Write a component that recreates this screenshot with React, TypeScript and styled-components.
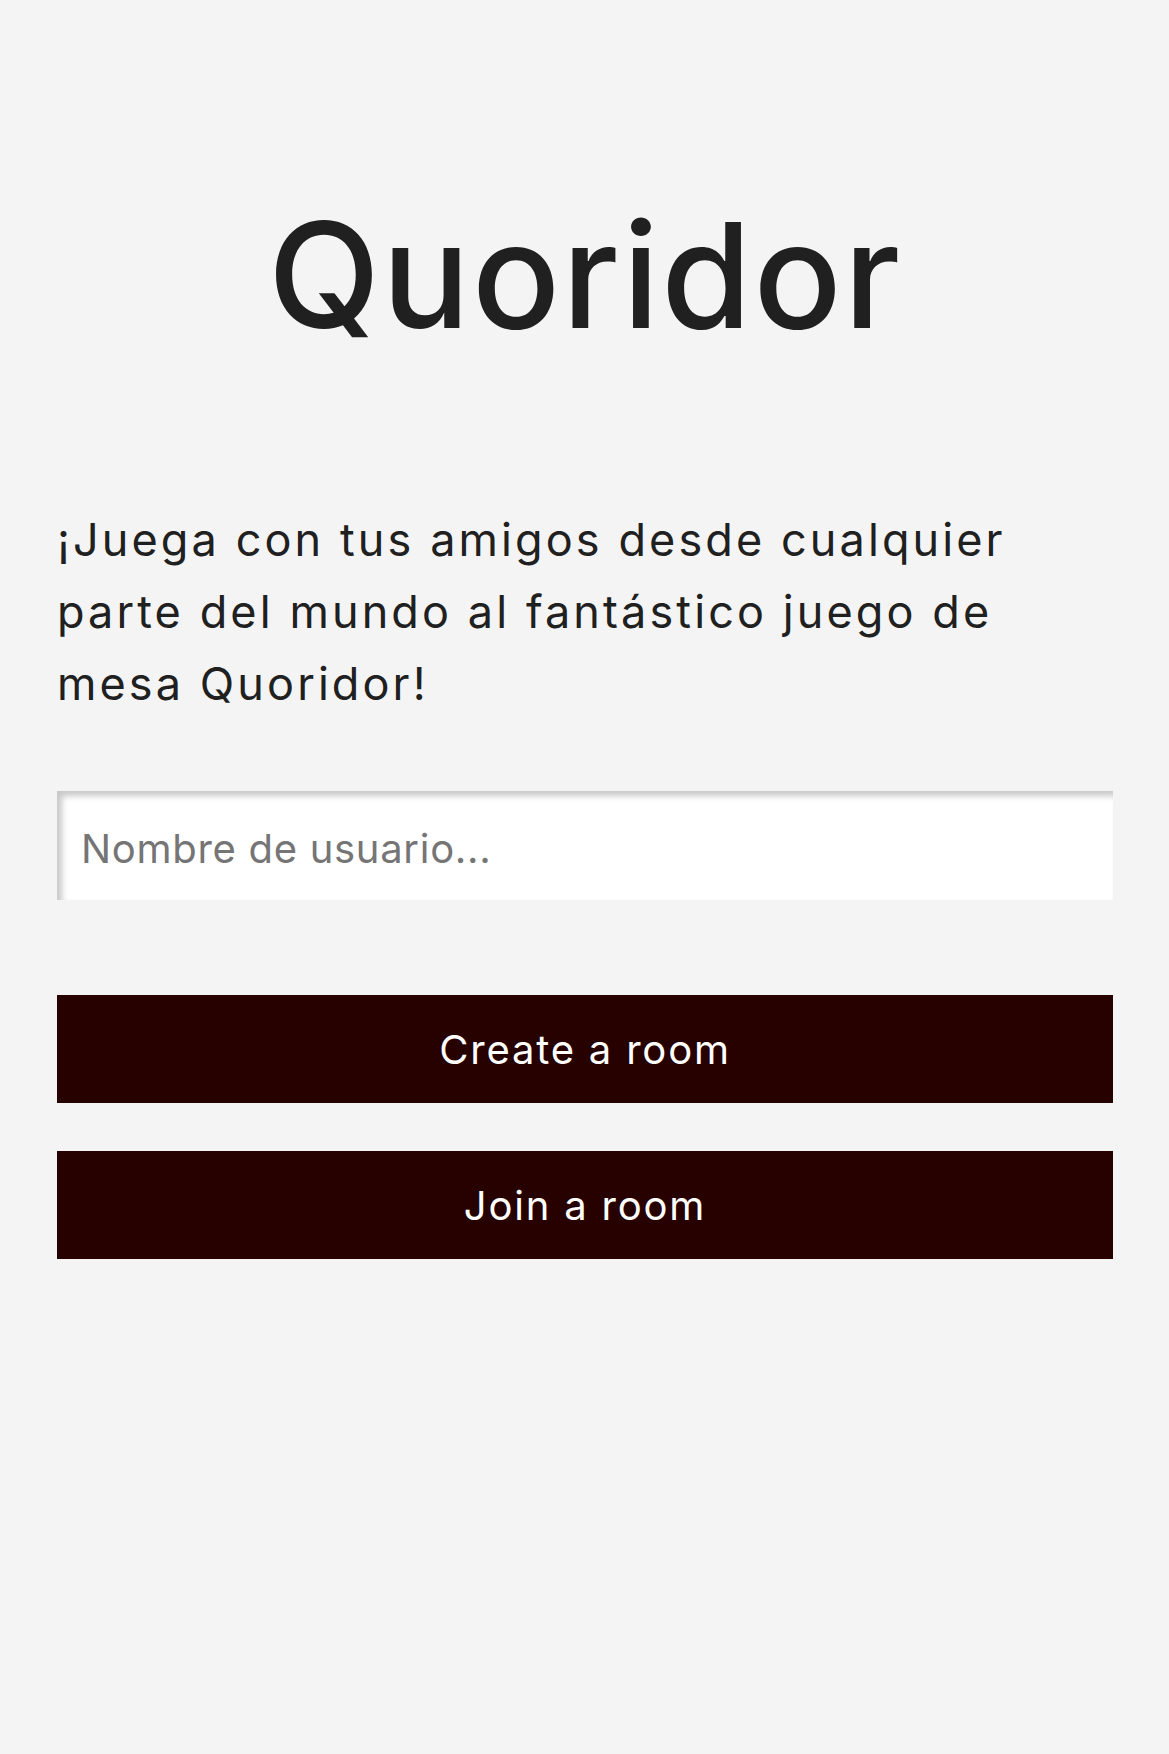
import styled, { createGlobalStyle } from 'styled-components';

const GlobalStyle = createGlobalStyle`
  body {
    margin: 0;
    background: #f4f4f4;
    font-family: Inter, "Noto Sans", sans-serif;
    color: #202020;
  }
`;

const Page = styled.main`
  padding: 0 56px 0 57px;
`;

const Title = styled.h1`
  margin: 0;
  padding-top: 195px;
  font-size: 146px;
  font-weight: 500;
  line-height: 160px;
  letter-spacing: 2px;
  text-align: center;
`;

const Description = styled.p`
  margin: 149px 0 0;
  font-size: 45px;
  font-weight: 400;
  line-height: 72px;
  letter-spacing: 3.1px;
`;

const NameInput = styled.input`
  display: block;
  box-sizing: border-box;
  width: 100%;
  height: 109px;
  margin-top: 71px;
  padding: 6px 24px 0;
  border: none;
  outline: none;
  background: #fff;
  box-shadow: inset 5px 5px 6px #c8c8c8;
  font-family: inherit;
  font-size: 40px;
  letter-spacing: 0.7px;
  color: #202020;

  &::placeholder {
    color: #757575;
  }
`;

const Actions = styled.div`
  display: flex;
  flex-direction: column;
  gap: 48px;
  margin-top: 95px;
`;

const RoomButton = styled.button`
  height: 108px;
  border: none;
  background: #270000;
  color: #fff;
  font-family: inherit;
  font-size: 40px;
  letter-spacing: 1.8px;
  cursor: pointer;
`;

export default function App() {
  return (
    <>
      <GlobalStyle />
      <Page>
        <Title>Quoridor</Title>
        <Description>
          ¡Juega con tus amigos desde cualquier
          <br />
          parte del mundo al fantástico juego de
          <br />
          mesa Quoridor!
        </Description>
        <NameInput placeholder="Nombre de usuario..." />
        <Actions>
          <RoomButton>Create a room</RoomButton>
          <RoomButton>Join a room</RoomButton>
        </Actions>
      </Page>
    </>
  );
}
